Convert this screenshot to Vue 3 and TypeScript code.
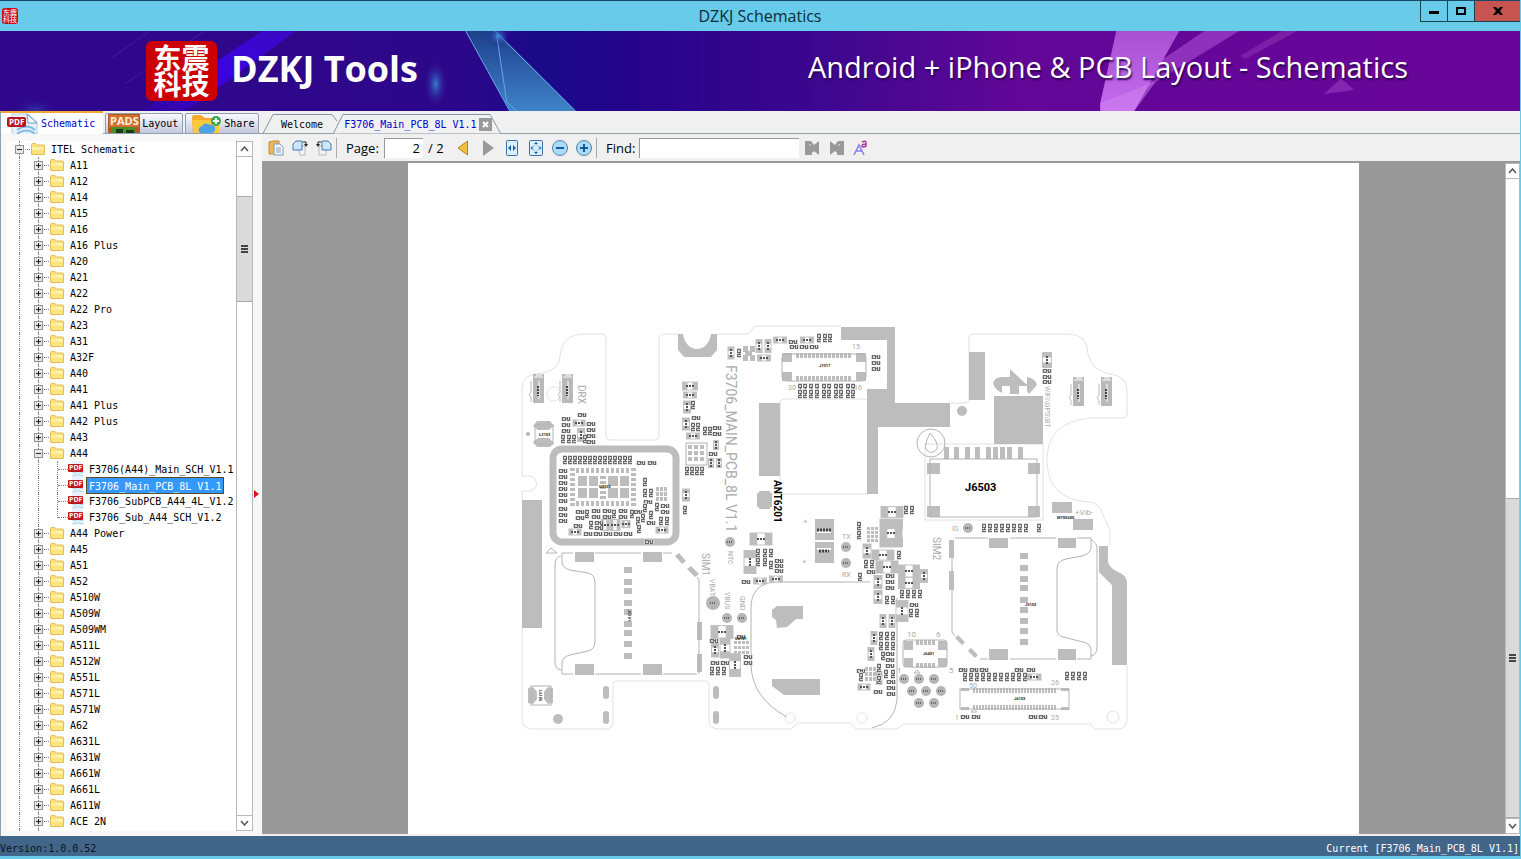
<script setup lang="ts">
import { ref } from 'vue'

interface TreeRow {
  label: string
  kind: 'root' | 'folder' | 'file'
  open?: boolean
  last?: boolean
}

const before = ['A11', 'A12', 'A14', 'A15', 'A16', 'A16 Plus', 'A20', 'A21', 'A22', 'A22 Pro', 'A23', 'A31', 'A32F', 'A40', 'A41', 'A41 Plus', 'A42 Plus', 'A43']
const files = ['F3706(A44)_Main_SCH_V1.1', 'F3706_Main_PCB_8L V1.1', 'F3706_SubPCB_A44_4L_V1.2', 'F3706_Sub_A44_SCH_V1.2']
const after = ['A44 Power', 'A45', 'A51', 'A52', 'A510W', 'A509W', 'A509WM', 'A511L', 'A512W', 'A551L', 'A571L', 'A571W', 'A62', 'A631L', 'A631W', 'A661W', 'A661L', 'A611W', 'ACE 2N', '']
const folder = (label: string): TreeRow => ({ label, kind: 'folder' })

const rows: TreeRow[] = [
  { label: 'ITEL Schematic', kind: 'root', open: true },
  ...before.map(folder),
  { label: 'A44', kind: 'folder', open: true },
  ...files.map((label, i): TreeRow => ({ label, kind: 'file', last: i === files.length - 1 })),
  ...after.map(folder),
]

const selected = ref('F3706_Main_PCB_8L V1.1')
const page = ref('2')
const query = ref('')

type Point = [number, number]
const grid = (x: number, y: number, nx: number, ny: number, dx: number, dy: number): Point[] => {
  const out: Point[] = []
  for (let j = 0; j < ny; j++) for (let i = 0; i < nx; i++) out.push([x + i * dx, y + j * dy])
  return out
}

// Designator labels that lie along the x axis
const flat: Point[] = [
  ...grid(563, 471, 1, 6, 0, 6), ...grid(563, 509, 1, 3, 0, 6), [641, 463], [652, 463],
  ...grid(580, 512, 1, 2, 0, 6), [596, 511], [607, 511], [623, 511], [596, 517], [607, 517], [623, 517], [578, 526],
  ...grid(588, 534, 5, 1, 10, 0), [599, 523], [599, 528], [648, 502], [665, 506], [665, 512], [651, 523], [638, 512], [649, 542],
  ...grid(566, 419, 1, 3, 0, 6), [582, 415], ...grid(591, 424, 1, 4, 0, 6),
  [696, 418], [717, 428], [717, 434], [713, 454],
  [793, 342], [794, 347], [804, 347], [814, 347], ...grid(876, 357, 1, 3, 0, 6),
  ...grid(779, 561, 1, 3, 0, 5), [746, 582], [1047, 371], [1047, 377], [1047, 382],
  [963, 670], [974, 670], [984, 670], [1019, 670], [1031, 670],
  [965, 717], [976, 717], [1033, 717], [1043, 717],
  ...grid(890, 654, 1, 3, 0, 6), [891, 682], [891, 688], [891, 694], [878, 692], [861, 671],
  [714, 641], [748, 657], [748, 663], [715, 663], [725, 663], [741, 637],
  [890, 576], [890, 582], [890, 588], [914, 605], [871, 572],
]

// Designator labels that lie along the y axis
const upright: Point[] = [
  ...grid(565, 460, 14, 1, 5, 0), [645, 482], [645, 493], [651, 493], [645, 508], [638, 521], [632, 514], [657, 507],
  [643, 518], [651, 515], [661, 521], [667, 521], [591, 525], [639, 529], [587, 514], [614, 514],
  [563, 439], [569, 439], [574, 439], [585, 439],
  [693, 405], [693, 427], [698, 427], [705, 431], [710, 431], ...grid(687, 471, 4, 1, 5, 0), [685, 510],
  [739, 353], [819, 338], [825, 338], [830, 338],
  ...[800, 805, 811, 817, 824, 829, 836, 841, 848, 853].flatMap((x): Point[] => [[x, 388], [x, 394]]),
  [758, 553], [765, 553], [771, 553], [758, 562], [765, 562], [771, 565],
  [906, 510], [912, 510], [859, 526], [859, 535], [899, 555], [866, 564], [872, 564], [860, 577],
  ...grid(984, 528, 8, 1, 6, 0), [1039, 528],
  [902, 594], [908, 594], [914, 594], [920, 594], [911, 613], [917, 613], [887, 600], [893, 600],
  ...grid(965, 677, 11, 1, 6, 0), [1067, 676], [1073, 676], [1079, 676], [1085, 676],
  ...grid(881, 636, 3, 2, 6, 10), [883, 656], [879, 668], [886, 674], [893, 674], [861, 677], [879, 680],
  [712, 671], [718, 671], [724, 671],
]

// Two-pad parts: centre, width, height
type Box = [number, number, number, number]
const twoPad: Box[] = [
  [579, 423, 12, 6], [605, 525, 8, 11], [615, 525, 10, 11], [626, 524, 8, 7], [575, 532, 12, 6], [662, 530, 12, 6],
  [690, 386, 15, 8], [690, 395, 13, 6], [693, 436, 13, 6], [764, 358, 13, 6], [780, 340, 13, 6], [807, 340, 13, 6],
  [761, 539, 22, 12], [760, 581, 13, 6], [776, 579, 13, 6], [892, 512, 22, 11], [891, 533, 22, 28],
  [883, 555, 22, 10], [887, 567, 22, 12], [909, 571, 21, 12], [909, 583, 21, 11], [722, 632, 22, 13], [1034, 677, 14, 6],
  [864, 687, 12, 6],
]
const twoPadUp: Box[] = [
  [581, 435, 7, 13], [687, 407, 7, 12], [686, 424, 7, 12], [716, 445, 5, 9], [719, 463, 5, 9], [711, 463, 5, 9],
  [686, 495, 7, 12], [731, 353, 6, 12], [759, 346, 6, 13], [768, 346, 6, 13], [750, 562, 12, 23], [867, 551, 8, 14],
  [924, 576, 7, 13], [878, 582, 8, 13], [878, 597, 8, 13], [902, 611, 12, 21], [883, 621, 6, 13], [892, 621, 6, 13],
  [874, 638, 6, 13], [871, 654, 6, 13], [879, 678, 6, 13], [715, 650, 7, 14], [725, 648, 10, 20], [735, 665, 11, 23],
  [1047, 360, 9, 15],
]

const solid: Box[] = [
  [522, 500, 20, 128], [759, 403, 21, 73], [969, 352, 16, 48], [994, 396, 49, 48], [1052, 502, 20, 11], [1073, 519, 20, 11],
  [575, 552, 19, 10], [643, 552, 19, 10], [575, 664, 19, 11], [643, 664, 19, 11], [697, 622, 5, 18], [697, 654, 5, 18],
  [989, 538, 19, 10], [1058, 538, 18, 10], [989, 649, 19, 11], [1058, 649, 18, 11], [949, 540, 5, 18], [949, 571, 5, 19],
  ...[567, 579, 588, 600, 609, 621, 630, 641, 653].map((y): Box => [624, y, 8, 6]),
  ...[553, 565, 576, 585, 597, 607, 618, 628, 639].map((y): Box => [1020, y, 8, 6]),
  ...[944, 954, 965, 975, 986, 993, 1000, 1007, 1018].map((x): Box => [x, 447, 5, 12]),
  [927, 463, 13, 11], [1028, 463, 12, 11], [927, 506, 13, 11], [1028, 506, 12, 11],
  [782, 353, 10, 9], [856, 353, 10, 9], [782, 372, 10, 9], [856, 372, 10, 9],
  ...grid(796, 353, 14, 2, 4, 23).map(([x, y]): Box => [x, y, 3, 5]),
  [578, 476, 9, 10], [589, 476, 9, 10], [608, 476, 10, 10], [620, 476, 9, 10],
  [578, 488, 9, 10], [589, 488, 9, 10], [608, 488, 10, 10], [620, 488, 9, 10],
  ...grid(576, 468, 11, 2, 5, 33).map(([x, y]): Box => [x, y, 3, 5]),
  ...grid(570, 468, 2, 8, 61, 5).map(([x, y]): Box => [x, y, 5, 3]),
  ...grid(600, 476, 1, 5, 0, 5).map(([x, y]): Box => [x, y, 6, 3]),
  ...grid(688, 445, 3, 3, 6, 6).map(([x, y]): Box => [x, y, 4, 4]),
  ...grid(734, 641, 4, 3, 4, 5).map(([x, y]): Box => [x, y, 3, 3]),
  ...grid(867, 527, 3, 4, 4, 4).map(([x, y]): Box => [x, y, 3, 3]),
  ...grid(656, 487, 3, 3, 4, 5).map(([x, y]): Box => [x, y, 3, 4]),
  ...grid(743, 346, 2, 2, 7, 9).map(([x, y]): Box => [x, y, 5, 6]), [745, 351, 7, 5],
  ...grid(865, 667, 3, 3, 4, 5).map(([x, y]): Box => [x, y, 3, 4]),
  [904, 641, 9, 9], [938, 641, 9, 9], [904, 658, 9, 9], [938, 658, 9, 9],
  ...grid(916, 640, 5, 2, 4, 23).map(([x, y]): Box => [x, y, 3, 5]),
  ...grid(973, 688, 28, 2, 3, 17).map(([x, y]): Box => [x, y, 2, 5]),
  [961, 688, 8, 3], [1061, 688, 8, 3], [961, 707, 8, 3], [1061, 707, 8, 3],
  [815, 519, 19, 21], [815, 542, 19, 21],
]

const pads: [number, number, number][] = [
  [528, 434, 2], [730, 542, 5], [846, 547, 5], [846, 563, 5], [713, 603, 7], [727, 618, 5], [742, 618, 5], [968, 528, 5],
  [904, 679, 5], [919, 679, 5], [934, 679, 5], [912, 691, 5], [926, 691, 5], [941, 691, 5], [919, 703, 5], [934, 703, 5],
]

const contacts: Point[] = [[533, 374], [562, 374], [1073, 377], [1101, 377]]
const pills: Point[] = [[603, 686], [603, 711], [713, 686], [713, 711]]

interface Mark { t: string; x: number; y: number; s: number; up?: boolean }
const marks: Mark[] = [
  { t: 'DRX', x: 578, y: 385, s: 10, up: true },
  { t: 'F3706_MAIN_PCB_8L V1.1', x: 726, y: 365, s: 14, up: true },
  { t: 'NTC', x: 728, y: 551, s: 7, up: true },
  { t: 'SIM1', x: 702, y: 553, s: 10, up: true },
  { t: 'SIM2', x: 933, y: 537, s: 10, up: true },
  { t: 'VBAT', x: 710, y: 579, s: 7, up: true },
  { t: 'VBUS', x: 725, y: 592, s: 7, up: true },
  { t: 'GND', x: 740, y: 596, s: 7, up: true },
  { t: 'WIFI\\GPS\\BT', x: 1045, y: 386, s: 7, up: true },
  { t: '15', x: 852, y: 349, s: 7 }, { t: '30', x: 788, y: 390, s: 7 }, { t: '16', x: 854, y: 390, s: 7 },
  { t: '+', x: 803, y: 524, s: 8 }, { t: '+', x: 802, y: 564, s: 8 },
  { t: 'TX', x: 842, y: 539, s: 7 }, { t: 'RX', x: 842, y: 577, s: 7 },
  { t: 'ID', x: 952, y: 531, s: 7 }, { t: '+Vib-', x: 1075, y: 515, s: 8 },
  { t: '10', x: 907, y: 637, s: 8 }, { t: '6', x: 936, y: 637, s: 8 }, { t: '5', x: 949, y: 673, s: 8 }, { t: '1', x: 897, y: 673, s: 8 },
  { t: '50', x: 969, y: 688, s: 7 }, { t: '26', x: 1051, y: 685, s: 7 }, { t: '1', x: 955, y: 720, s: 7 }, { t: '25', x: 1051, y: 720, s: 7 },
]
const tiny: Mark[] = [
  { t: 'J1017', x: 819, y: 367, s: 4 }, { t: 'U3102', x: 599, y: 488, s: 4 }, { t: 'J5102', x: 1025, y: 606, s: 4 },
  { t: 'J5101', x: 628, y: 610, s: 4, up: true }, { t: 'M700600', x: 1057, y: 519, s: 4 }, { t: 'J6401', x: 923, y: 655, s: 4 },
  { t: 'J6102', x: 1014, y: 700, s: 4 }, { t: 'L3103', x: 539, y: 436, s: 4 }, { t: 'U6101', x: 735, y: 640, s: 4 },
  { t: 'L6105', x: 539, y: 690, s: 4, up: true },
]
</script>

<template>
  <div class="window">
    <header class="titlebar">
      <div class="app-icon">东震<br />科技</div>
      <h1>DZKJ Schematics</h1>
      <div class="win-buttons">
        <button type="button" aria-label="Minimize"><svg width="12" height="12"><rect x="1" y="6" width="10" height="3" /></svg></button>
        <button type="button" aria-label="Maximize"><svg width="12" height="12"><path d="M1 2h10v8H1zM3 4v4h6V4z" fill-rule="evenodd" /></svg></button>
        <button type="button" class="close" aria-label="Close"><svg width="12" height="12"><path d="M1 2h3l2 2 2-2h3L8 6l3 4H8L6 8l-2 2H1l3-4z" /></svg></button>
      </div>
    </header>

    <section class="banner">
      <svg class="banner-art" viewBox="0 0 1521 80" preserveAspectRatio="none" aria-hidden="true">
        <defs>
          <linearGradient id="sky">
            <stop offset="0" stop-color="#2f078c" /><stop offset=".3" stop-color="#2d078a" /><stop offset=".36" stop-color="#190a88" />
            <stop offset=".42" stop-color="#26048a" /><stop offset=".55" stop-color="#3f078f" /><stop offset=".67" stop-color="#620798" /><stop offset="1" stop-color="#69069a" />
          </linearGradient>
          <linearGradient id="streak" x1="1" y1="0" x2="0" y2="1"><stop offset="0" stop-color="#3a08c0" /><stop offset=".5" stop-color="#3904e0" /><stop offset="1" stop-color="#3205a0" /></linearGradient>
          <linearGradient id="shard" x1="0" y1="0" x2="0" y2="1"><stop offset="0" stop-color="#1d3f8c" /><stop offset="1" stop-color="#3f84c8" /></linearGradient>
          <linearGradient id="violet" x1="0" y1="0" x2="0" y2="1"><stop offset="0" stop-color="#a94fd2" /><stop offset="1" stop-color="#c46bee" /></linearGradient>
          <radialGradient id="glow"><stop offset="0" stop-color="#3a9be0" stop-opacity=".8" /><stop offset="1" stop-color="#2d078a" stop-opacity="0" /></radialGradient>
        </defs>
        <rect width="1521" height="80" fill="url(#sky)" />
        <path d="M262 0h34l-98 72-14 8h-42z" fill="url(#streak)" />
        <path d="M205 0l-80 53M150 0l-40 28" stroke="#4a2cae" opacity=".6" />
        <ellipse cx="436" cy="53" rx="12" ry="24" fill="url(#glow)" />
        <ellipse cx="35" cy="80" rx="24" ry="14" fill="url(#glow)" opacity=".4" />
        <path d="M466 0h31l79 80h-66z" fill="url(#shard)" />
        <path d="M466 0l44 80M495 0l81 80M497 4l10 67 10 9" fill="none" stroke="#69a5ea" stroke-width="1" />
        <circle cx="499" cy="5" r="12" fill="url(#glow)" />
        <path d="M1205 0h35l-105 64 20-30z" fill="#8f31ba" /><path d="M1283 0h15l-52 28-5-3z" fill="#7d1ea9" />
        <path d="M1117 0h63l-45 80h-34v-8z" fill="url(#violet)" /><path d="M1101 72l56-22-22 30h-34z" fill="#cf84f2" opacity=".5" />
        <path d="M1342 47l13 12-30 4z" fill="#8526b0" />
      </svg>
      <div class="logo">东震<br />科技</div>
      <strong>DZKJ Tools</strong>
      <p>Android + iPhone &amp; PCB Layout - Schematics</p>
    </section>

    <main class="body">
      <aside class="sidebar">
        <nav class="side-tabs">
          <button type="button" class="side-tab active">
            <svg width="34" height="22" aria-hidden="true"><path d="M7 1h16l9 8v13H7z" fill="#e6f1fb" stroke="#b7cde2" /><path d="M22 1l10 9h-9z" fill="#fff" stroke="#6d9cc8" /><path d="M12 17q10-7 18 0M12 21q10-7 18 0" fill="none" stroke="#83bce2" stroke-width="2" /><rect x="2" y="4" width="19" height="10" rx="2" fill="#b71620" /><text x="4" y="12" font-size="8" font-weight="700" fill="#fff">PDF</text></svg>
            Schematic
          </button>
          <button type="button" class="side-tab">
            <svg width="32" height="20" aria-hidden="true"><rect width="32" height="20" fill="#b35a24" /><rect x="1" y="1" width="30" height="12" fill="#d46f2f" /><text x="2" y="11" font-size="11" font-weight="700" fill="#fff1df">PADS</text><rect x="4" y="13" width="24" height="7" fill="#4a8e2c" /><path d="M8 15h7v5H8zm10 1h8v3h-8z" fill="#173b18" /></svg>
            Layout
          </button>
          <button type="button" class="side-tab">
            <svg width="34" height="20" aria-hidden="true"><path d="M4 3q0-2 2-2h7l4 3h11q3 0 3 3v13H5z" fill="#f3a92a" /><path d="M4 6h27v14H6z" fill="#ffc83d" /><path d="M12 19a4 4 0 0 1 2-7 5 5 0 0 1 8-1 4 4 0 0 1 2 8z" fill="#4da3ea" /><circle cx="28" cy="7" r="5" fill="#35a853" /><path d="M25 7h6M28 4v6" stroke="#fff" stroke-width="2" /></svg>
            Share
          </button>
        </nav>

        <div class="side-panel">
          <ul class="tree">
            <li v-for="(row, i) in rows" :key="i" :class="['row', row.kind]">
              <span v-if="row.kind !== 'root'" class="guide"></span>
              <span v-if="row.kind === 'file'" class="guide"></span>
              <span :class="['branch', { last: row.last }]">
                <button v-if="row.kind !== 'file'" type="button" class="toggle" :aria-label="'Toggle ' + row.label">
                  <svg width="9" height="9"><path :d="row.open ? 'M2 4.5h5' : 'M2 4.5h5M4.5 2v5'" stroke="#222" /></svg>
                </button>
              </span>
              <svg v-if="row.kind !== 'file'" class="folder-icon" width="14" height="12" aria-hidden="true"><path d="M.5 1.5q0-1 1-1h3l2 1.500h6q1 0 1 1v8.500H.5z" fill="#fbe27a" stroke="#e0be5a" /><path d="M1 4h12v3H1z" fill="#fff0a8" /></svg>
              <svg v-else class="pdf-icon" width="16" height="16" aria-hidden="true"><path d="M4 0h9l3 3v13H4z" fill="#e8f3fb" /><path d="M5 12q5-3 10 0M5 15q5-3 10 0" fill="none" stroke="#a4d4ee" /><rect y="3" width="15" height="8" rx="1" fill="#c0141d" /><text x="1" y="9" font-size="7" font-weight="700" fill="#fff">PDF</text></svg>
              <button type="button" :class="['name', { selected: row.label === selected }]" @click="row.kind === 'file' && (selected = row.label)">{{ row.label }}</button>
            </li>
          </ul>
          <div class="scrollbar side-scroll">
            <button type="button" aria-label="Scroll up"><svg width="9" height="6"><path d="M1 5l3.500-4L8 5" /></svg></button>
            <div class="track"><div class="thumb"><i></i></div></div>
            <button type="button" aria-label="Scroll down"><svg width="9" height="6"><path d="M1 1l3.500 4L8 1" /></svg></button>
          </div>
          <div class="splitter"><svg width="5" height="8" aria-hidden="true"><path d="M0 0l5 4-5 4z" fill="#d8131b" /></svg></div>
        </div>
      </aside>

      <section class="viewer">
        <nav class="doc-tabs">
          <svg class="tab-shapes" width="242" height="23" aria-hidden="true">
            <path d="M0 22.500L10 3.500H69L74 10" fill="none" stroke="#8296a8" />
            <path d="M70 23L80 3.500H227L238 23z" fill="#f1f1f1" stroke="#8296a8" />
          </svg>
          <button type="button" class="doc-tab">Welcome</button>
          <button type="button" class="doc-tab current">F3706_Main_PCB_8L V1.1</button>
          <button type="button" class="tab-close" aria-label="Close tab"><svg width="13" height="13"><path d="M4 4l5 5M9 4l-5 5" stroke="#fff" stroke-width="2" /></svg></button>
        </nav>

        <div class="toolbar">
          <button type="button" aria-label="Copy"><svg width="16" height="16"><path d="M1 2l5-1h5v13H1z" fill="#e9b75c" stroke="#c78d2e" /><path d="M6 4h6l3 3v8H6z" fill="#f3f7fc" stroke="#7a9cc0" /><path d="M8 8h5M8 10h5M8 12h5" stroke="#86a5c6" /></svg></button>
          <button type="button" aria-label="Rotate right"><svg width="16" height="16"><path d="M6 6h7v9H8z" fill="#f3f5f8" stroke="#b3bac3" /><path d="M1 4l3-3h6v9H1z" fill="#cfe5f8" stroke="#4178b4" /><path d="M11 2h3v2" fill="none" stroke="#222" /><path d="M12 4h4l-2 3z" fill="#222" /></svg></button>
          <button type="button" aria-label="Rotate left"><svg width="16" height="16"><path d="M3 6h7v9H3z" fill="#f3f5f8" stroke="#b3bac3" /><path d="M6 1h6l3 3v6H6z" fill="#cfe5f8" stroke="#4178b4" /><path d="M5 2H2v2" fill="none" stroke="#222" /><path d="M0 4h4L2 7z" fill="#222" /></svg></button>
          <i class="divider"></i>
          <label class="page-label" for="page-no">Page:</label>
          <input id="page-no" v-model="page" class="page-input" type="text" />
          <span class="page-total">/ 2</span>
          <button type="button" aria-label="Previous page"><svg width="12" height="16"><path d="M10.500 1v14L1 8z" fill="#efbf3e" stroke="#b9851b" /></svg></button>
          <button type="button" aria-label="Next page" class="next"><svg width="12" height="16"><path d="M1 0l11 8-11 8z" fill="#999" /></svg></button>
          <button type="button" aria-label="Fit width"><svg width="12" height="16"><rect x=".5" y=".5" width="11" height="15" rx="1" fill="#d9effc" stroke="#3a6ca8" /><path d="M5 5v6L2 8zM7 5v6l3-3z" fill="#165e9e" /></svg></button>
          <button type="button" aria-label="Fit page"><svg width="14" height="16"><rect x=".5" y=".5" width="13" height="15" rx="1" fill="#d9effc" stroke="#3a6ca8" /><path d="M5 4l2-2 2 2zM5 12l2 2 2-2zM3.500 6l-2 2 2 2zM10.500 6l2 2-2 2z" fill="#165e9e" /><circle cx="7" cy="8" r="3" fill="none" stroke="#5e8fbe" stroke-dasharray="1 1" /></svg></button>
          <button type="button" aria-label="Zoom out"><svg width="16" height="16"><circle cx="8" cy="8" r="7.500" fill="#a9dcf8" stroke="#597da4" /><path d="M4 8h8" stroke="#145a96" stroke-width="2" /></svg></button>
          <button type="button" aria-label="Zoom in"><svg width="16" height="16"><circle cx="8" cy="8" r="7.500" fill="#a9dcf8" stroke="#597da4" /><path d="M4 8h8M8 4v8" stroke="#145a96" stroke-width="2" /></svg></button>
          <i class="divider"></i>
          <label class="find-label" for="find">Find:</label>
          <input id="find" v-model="query" class="find-input" type="text" />
          <button type="button" class="next" aria-label="Find previous"><svg width="16" height="14"><path d="M1 14V0h6l3 4 5-4v14l-5-4-2 2v2z" fill="#999" /><path d="M5 3l2 2" stroke="#ddd" /></svg></button>
          <button type="button" class="next" aria-label="Find next"><svg width="16" height="14"><path d="M15 14V0H9L6 4 1 0v14l5-4 2 2v2z" fill="#999" /><path d="M9 5l2-2" stroke="#ddd" /></svg></button>
          <button type="button" aria-label="Match case"><svg width="16" height="16"><path d="M1 15L6 5l5 10M3 11h6" fill="none" stroke="#8a7cf0" stroke-width="1.500" /><path d="M9 2q4-2 4 1v4M13 4q-4 0-4 2t4 0" fill="none" stroke="#b3389c" stroke-width="1.500" /></svg></button>
        </div>

        <div class="canvas">
          <div class="paper">
            <svg class="board" viewBox="408 163 951 671" role="img" aria-label="F3706 main board layout">
              <defs>
                <g id="lab"><rect x="-5" y="-2" width="10" height="4" fill="#d8d8d8" /><path d="M-3.500 -2v4M-3 -1.500h2M-3 1.500h2M-.5 -2v4M0 -.5h1M1.500 -2v4M3.500 -2v4M2 1.500h1" stroke="#6a6a6a" fill="none" /></g>
              </defs>

              <g class="outline">
                <path d="M522 500V491H529A7 7 0 0 0 529 476H522V388Q522 374 542 373Q560 370 560 356Q562 334 584 334H602Q606 334 606 339V436Q606 440 610 440H655Q659 440 659 436V340Q659 334 665 334H678M717 334H748L755 326H841M950 403H965Q969 403 969 398V338Q969 334 974 334H1068Q1088 334 1088 354Q1092 371 1110 374Q1127 376 1127 390V414Q1127 418 1122 418H1090Q1047 422 1047 460Q1047 500 1090 502Q1100 503 1103 515L1110 530V545M1127 665V720Q1126 729 1118 729H1095L1090 724H903L897 729H856L850 723H798L791 729H718Q709 729 709 720V684Q709 681 706 681H616Q613 681 613 684V722Q613 729 605 729H532Q522 728 522 720V628" />
                <path d="M780 403q0-4 4-4h80q4 0 4 4v91h-88zM925 444h118v76H925z" />
                <circle cx="790" cy="718" r="5" /><circle cx="862" cy="718" r="5" /><circle cx="1113" cy="717" r="6" /><circle cx="554" cy="394" r="7" />
              </g>

              <g class="copper">
                <path d="M678 334H683C686 354 708 354 711 334H717V350L711 357H684L678 350Z" />
                <path d="M841 327H895V403H950V427H878V494H867V389H887V340H841Z" />
                <path d="M1099 546h9v16q2 6 8 9 10 4 11 10v84h-15v-80l-13-13z" />
                <path d="M993 383q2-6 9-6h8v-8l16 15h1v-7q8 1 10 8l-8 9-2-3v-5h-8v8h-9v-8h-8v7q-8-4-9-10z" />
                <path d="M772 610l5-4h26v13h-7l-9 8-10 1-1-8-4-3zM772 679h48v16h-36l-12-9z" />
                <path d="M675 556l4-3 7 8-4 3zM687 569l4-3 8 8-4 3zM955 638l3-3 7 7-3 3zM968 651l3-3 7 7-3 3z" />
                <circle cx="962" cy="411" r="5" /><circle cx="558" cy="719" r="5" />
                <path d="M537 421h13l4 5-5 4h-11l-5-4zM538 438h11l5 5-4 4h-13l-4-5zM528 688l5-1 4 5v7l-4 5-5-1zM553 688l-5-1-4 5v7l4 5 5-1z" />
                <path d="M759 491h11v18h-11zM757 493h15v14h-15z" />
                <rect v-for="(b, i) in solid" :key="i" :x="b[0]" :y="b[1]" :width="b[2]" :height="b[3]" />
                <rect v-for="(p, i) in pills" :key="'p' + i" :x="p[0]" :y="p[1]" width="6" height="13" rx="3" />
              </g>

              <rect x="553" y="449" width="123" height="93" rx="9" fill="none" stroke="#bdbdbd" stroke-width="7" />
              <g class="trace">
                <path d="M562 553H573M595 553H641M663 553H672M562 674H573M595 674H641M663 674H697M699 674V580L697 577M562 553V563Q563 568 570 570L588 573Q595 575 595 582V642Q595 649 588 651L570 655Q562 657 562 663V674M561 556Q555 557 555 565V662Q555 669 561 670" />
                <path d="M955 538H988M1010 538H1056M1077 538H1091M980 659H988M1010 659H1056M1077 659H1091M952 558V571M952 590V632L955 636M1091 538V548Q1090 554 1082 556L1066 559Q1057 561 1057 568V630Q1057 635 1063 637L1083 642Q1091 644 1091 650V659M1091 540Q1097 542 1097 549V647Q1097 655 1091 656" />
                <rect x="782" y="354" width="84" height="27" rx="4" /><rect x="930" y="459" width="107" height="58" />
                <rect x="903" y="640" width="44" height="27" rx="3" /><rect x="960" y="689" width="109" height="20" />
                <rect x="535" y="425" width="18" height="19" /><rect x="531" y="686" width="20" height="19" />
                <rect x="686" y="443" width="21" height="22" />
                <circle cx="931" cy="443" r="14" /><path d="M930 433Q939 443 937 449Q931 456 926 449Q924 445 930 433Z" />
                <path d="M870 582H775Q751 584 751 608V665Q752 698 787 717M897 598V700Q895 723 872 728" />
                <path d="M546 553l5-5 6 5zM971 712h6l-3-3zM914 673h6l-3-3z" />
              </g>

              <g v-for="(c, i) in contacts" :key="'c' + i" :transform="`translate(${c[0]} ${c[1]})`">
                <path d="M-2 7v11l-2 3 2 2v5" fill="none" stroke="#bbb" /><rect width="11" height="29" fill="#b9b9b9" /><path d="M1 3h9M3 1h6" stroke="#fff" /><path d="M6 7v18" stroke="#fff" /><path d="M5 12v10" stroke="#444" stroke-width="2" stroke-dasharray="2 1" />
              </g>

              <g v-for="(b, i) in twoPad" :key="'h' + i">
                <rect :x="b[0] - b[2] / 2" :y="b[1] - b[3] / 2" :width="b[2]" :height="b[3]" fill="#fff" stroke="#c4c4c4" />
                <rect :x="b[0] - b[2] / 2" :y="b[1] - b[3] / 2" :width="b[2] / 3" :height="b[3]" fill="#bdbdbd" />
                <rect :x="b[0] + b[2] / 6" :y="b[1] - b[3] / 2" :width="b[2] / 3" :height="b[3]" fill="#bdbdbd" />
                <path :d="`M${b[0] - 4} ${b[1]}h8`" stroke="#555" stroke-width="2" stroke-dasharray="2 1" />
              </g>
              <g v-for="(b, i) in twoPadUp" :key="'v' + i">
                <rect :x="b[0] - b[2] / 2" :y="b[1] - b[3] / 2" :width="b[2]" :height="b[3]" fill="#fff" stroke="#c4c4c4" />
                <rect :x="b[0] - b[2] / 2" :y="b[1] - b[3] / 2" :width="b[2]" :height="b[3] / 3" fill="#bdbdbd" />
                <rect :x="b[0] - b[2] / 2" :y="b[1] + b[3] / 6" :width="b[2]" :height="b[3] / 3" fill="#bdbdbd" />
                <path :d="`M${b[0]} ${b[1] - 4}v8`" stroke="#555" stroke-width="2" stroke-dasharray="2 1" />
              </g>
              <path d="M881 519h22v10h-22zM881 538h22v9h-22z" fill="#bdbdbd" />
              <path d="M817 532h14M817 549h14" stroke="#fff" stroke-width="2" />
              <path d="M817 530h14M819 551h10" stroke="#444" stroke-width="3" stroke-dasharray="2 1" />

              <use v-for="(p, i) in flat" :key="'f' + i" href="#lab" :x="p[0]" :y="p[1]" />
              <use v-for="(p, i) in upright" :key="'u' + i" href="#lab" :transform="`translate(${p[0]} ${p[1]}) rotate(90)`" />

              <g v-for="(p, i) in pads" :key="'d' + i">
                <circle :cx="p[0]" :cy="p[1]" :r="p[2]" fill="#b5b5b5" />
                <path v-if="p[2] > 2" :d="`M${p[0] - 3} ${p[1]}h6`" stroke="#666" stroke-width="2" stroke-dasharray="1 1" />
              </g>

              <text v-for="(m, i) in marks" :key="'m' + i" class="mark" :font-size="m.s" :transform="`translate(${m.x} ${m.y}) rotate(${m.up ? 90 : 0})`">{{ m.t }}</text>
              <text v-for="(m, i) in tiny" :key="'t' + i" class="tiny" :font-size="m.s" :transform="`translate(${m.x} ${m.y}) rotate(${m.up ? 90 : 0})`">{{ m.t }}</text>
              <text class="ref" font-size="11" x="965" y="491">J6503</text>
              <text class="ref" font-size="10" transform="translate(774 480) rotate(90)">ANT6201</text>
            </svg>
          </div>
          <div class="scrollbar doc-scroll">
            <button type="button" aria-label="Page up"><svg width="9" height="6"><path d="M1 5l3.500-4L8 5" /></svg></button>
            <div class="track"><div class="thumb"><i></i></div></div>
            <button type="button" aria-label="Page down"><svg width="9" height="6"><path d="M1 1l3.500 4L8 1" /></svg></button>
          </div>
        </div>
      </section>
    </main>

    <footer class="status"><span>Version:1.0.0.52</span><span class="current-doc">Current [{{ selected }}]</span></footer>
  </div>
</template>

<style>
html, body { height: 100%; }
#app { height: 100%; }
</style>

<style scoped>
* { box-sizing: border-box; }
button { padding: 0; border: 0; background: none; font: inherit; color: inherit; }
svg { display: block; flex: none; }
.window {
  display: flex; flex-direction: column; height: 100vh; min-height: 400px;
  border-right: 1px solid #67cbe9; border-bottom: 3px solid #67cbe9;
  background: #f0f0f0; color: #000; overflow: hidden;
  font: 10px/16px "DejaVu Sans Mono", "Liberation Mono", monospace;
}
.titlebar {
  display: flex; align-items: center; flex: none; height: 31px; padding-left: 2px; position: relative;
  border-top: 1px solid #164a68; background: #67cbe9; font-family: "Open Sans", "Noto Sans", sans-serif;
}
.app-icon {
  width: 16px; height: 16px; padding-top: 1px; text-align: center;
  border-radius: 3px; background: #cc0a12; color: #fff; font: 7px/7px "Noto Sans CJK SC", sans-serif;
}
.titlebar h1 { flex: 1; margin: 0 -100px 0 -18px; text-align: center; font-size: 16px; line-height: 28px; font-weight: 400; color: #0c2c3c; }
.win-buttons { display: flex; align-self: flex-start; height: 21px; z-index: 1; border: solid #1c4252; border-width: 0 0 1px 1px; }
.win-buttons button { display: flex; align-items: center; justify-content: center; width: 27px; border-right: 1px solid #1c4252; }
.win-buttons .close { width: 45px; border-right: 0; background: #c75450; }

.banner { position: relative; display: flex; align-items: center; flex: none; height: 80px; padding: 0 112px 0 146px; color: #fff; overflow: hidden; font-family: "Open Sans", "Noto Sans", sans-serif; }
.banner-art { position: absolute; inset: 0; width: 100%; height: 100%; }
.logo {
  position: relative; width: 71px; height: 60px; margin-right: 14px; padding-top: 3px; text-align: center;
  border-radius: 6px; background: #cc0003; font: 700 28px/26px "Noto Sans CJK SC", sans-serif;
}
.banner strong { position: relative; font-size: 36px; line-height: 48px; font-weight: 700; margin-bottom: 4px; }
.banner p { position: relative; margin: 0 0 8px auto; font-size: 29px; line-height: 40px; text-shadow: 1px 2px 2px #2a0050; white-space: nowrap; }

.body { display: flex; flex: 1; min-height: 0; }
.sidebar { display: flex; flex-direction: column; flex: none; width: 262px; border-left: 1px solid #8fa2b2; background: #f7f7f8; }
.side-tabs { display: flex; align-items: flex-end; flex: none; gap: 2px; height: 23px; background: #f0f0f0; box-shadow: inset 0 -1px #8fa2b2; }
.side-tab {
  display: flex; align-items: center; gap: 2px; height: 21px; padding: 0 4px 0 2px; border: 1px solid #8fa0b4; border-radius: 2px 2px 0 0;
  background: linear-gradient(#fafaff, #c3c8df); overflow: hidden;
}
.side-tab.active { height: 23px; padding: 0 8px 0 4px; border: 0; border-top: 2px solid #f5a531; border-radius: 0; background: #fff; color: #0000c8; }
.side-tab text, .pdf-icon text { font-family: "Open Sans", sans-serif; }
.side-panel { display: flex; flex: 1; min-height: 0; padding: 7px 0 5px 6px; }
.tree { flex: 1; min-width: 0; margin: 0; padding: 0 0 0 12px; overflow: hidden; list-style: none; background: #fff; }
.row { display: flex; align-items: center; height: 16px; white-space: nowrap; }
.guide { flex: none; width: 19px; height: 16px; border-left: 1px dotted #808080; }
.branch { position: relative; flex: none; width: 12px; height: 16px; border-left: 1px dotted #808080; }
.branch::after { content: ""; position: absolute; left: 0; right: 1px; top: 8px; border-top: 1px dotted #808080; }
.branch.last { height: 9px; align-self: flex-start; }
.toggle { position: absolute; z-index: 1; left: -5px; top: 4px; width: 9px; height: 9px; background: #e6e6e6; box-shadow: inset 0 0 0 1px #949494; }
.name { height: 16px; margin-left: 4px; padding: 1px 2px 0; line-height: 15px; }
.file .name { margin-left: 3px; }
.file .pdf-icon { margin-left: -1px; }
.name.selected { background: #3399ff; color: #fff; box-shadow: 0 0 0 1px #5c4a2a; height: 15px; }

.scrollbar { display: flex; flex-direction: column; flex: none; background: #fff; }
.scrollbar button { display: flex; align-items: center; justify-content: center; flex: none; height: 16px; border: 1px solid #b8b8b8; background: #fff; }
.scrollbar path { fill: none; stroke: #555; stroke-width: 1.5px; }
.track { display: flex; flex-direction: column; flex: 1; min-height: 0; border: solid #b8b8b8; border-width: 0 1px; }
.thumb { display: flex; align-items: center; justify-content: center; border: solid #aaa; border-width: 1px 0; background: #dadada; }
.thumb i { width: 7px; height: 8px; background: repeating-linear-gradient(#444 0 2px, transparent 2px 3px); }
.side-scroll { width: 17px; }
.side-scroll .track::before { content: ""; flex: 39 0 0; }
.side-scroll .thumb { flex: 104 0 0; }
.side-scroll .track::after { content: ""; flex: 515 0 0; }
.splitter { display: flex; align-items: center; width: 9px; padding: 16px 0 0 1px; }

.viewer { display: flex; flex-direction: column; flex: 1; min-width: 0; }
.doc-tabs { position: relative; display: flex; align-items: flex-end; flex: none; height: 23px; box-shadow: inset 0 -1px #8fa2a8; }
.tab-shapes { position: absolute; left: 1px; top: 0; }
.doc-tab { position: relative; height: 19px; margin-left: 19px; }
.doc-tab.current { margin-left: 21px; color: #0000d0; }
.tab-close { position: relative; margin: 0 0 3px 2px; background: #9a9a9a; }
.toolbar { display: flex; align-items: center; flex: none; height: 29px; padding-left: 2px; border-bottom: 2px solid #999; font: 13px/20px "Open Sans", "Noto Sans", sans-serif; }
.toolbar button { display: flex; align-items: center; justify-content: center; flex: none; width: 24px; height: 24px; }
.toolbar .next { width: 25px; }
.divider { flex: none; width: 1px; height: 20px; margin-right: 9px; background: #aaa; }
.page-label { width: 38px; }
.find-label { width: 33px; }
.toolbar input { height: 20px; padding: 0 3px; border: solid #999; border-width: 1px 0 0 1px; background: #fff; font: inherit; outline: 0; }
.page-input { width: 39px; text-align: right; }
.find-input { width: 160px; }
.page-total { width: 28px; padding-left: 5px; white-space: nowrap; }

.canvas { display: grid; grid-template-columns: 146fr 951fr 146fr 15px; flex: 1; min-height: 0; margin-bottom: 2px; background: #999; }
.paper { grid-column: 2; min-height: 0; background: #fff; overflow: hidden; }
.board { width: 100%; height: 100%; }
.doc-scroll { grid-column: 4; }
.doc-scroll .track::before { content: ""; flex: 320 0 0; }
.doc-scroll .thumb { flex: 320 0 0; }
.outline { fill: none; stroke: #e2e2e2; }
.copper { fill: #bdbdbd; }
.trace { fill: none; stroke: #b4b4b4; }
.mark { fill: #aaa; font-family: Roboto, sans-serif; font-weight: 400; }
.tiny { fill: #222; font-family: Roboto, sans-serif; font-weight: 700; }
.ref { fill: #000; font-family: Roboto, sans-serif; font-weight: 700; }

.status { display: flex; justify-content: space-between; flex: none; height: 20px; padding-top: 5px; line-height: 15px; background: #42658a; color: #071421; }
.current-doc { padding-right: 1px; color: #fff; }
</style>
